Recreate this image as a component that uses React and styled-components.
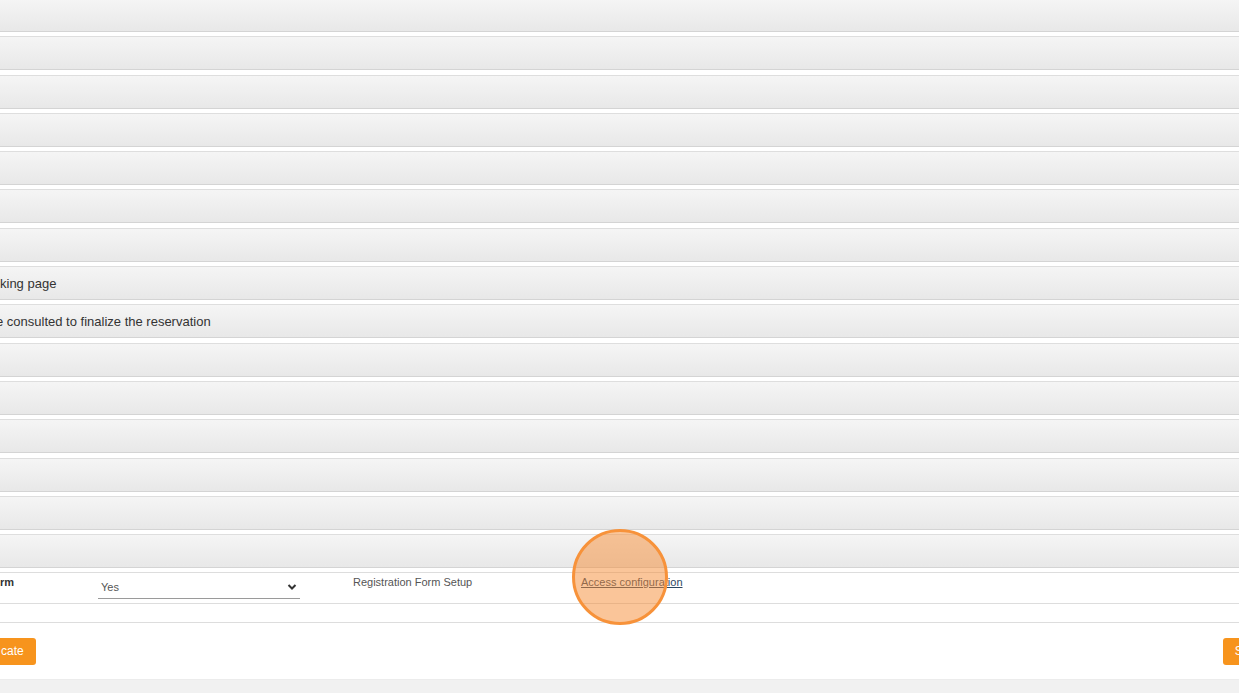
import React from 'react'
import styled, { createGlobalStyle } from 'styled-components'

const Global = createGlobalStyle`
  html, body { margin: 0; padding: 0; background: #fff; }
  body { overflow: hidden; font-family: "Liberation Sans", Arial, sans-serif; }
`

const Page = styled.div`
  width: 1239px;
  height: 693px;
  overflow: hidden;
  display: flex;
  flex-direction: column;
`

const BarList = styled.div`
  display: flex;
  flex-direction: column;
  gap: 4.3px;
  margin-top: -2px;
`

const Bar = styled.div`
  box-sizing: border-box;
  height: 34px;
  display: flex;
  align-items: center;
  border-top: 1px solid #dedede;
  border-bottom: 1px solid #d4d4d4;
  background: linear-gradient(to bottom, #f5f5f5 0%, #e8e8e8 100%);
  font-size: 13px;
  color: #333;
  white-space: nowrap;
  overflow: hidden;
`

const BarLabel = styled.span`
  margin-left: ${p => p.$shift || 0}px;
`

const FormTable = styled.div`
  margin-top: 4px;
  border-top: 1px solid #dddddd;
`

const FormRow = styled.div`
  display: grid;
  grid-template-columns: 98px 255px 228px 1fr;
  height: 31px;
  box-sizing: border-box;
  padding-top: 2px;
  border-bottom: 1px solid #dddddd;
  font-size: 11px;
  color: #555;
`

const SpacerRow = styled.div`
  height: 18px;
  border-bottom: 1px solid #dddddd;
`

const FieldLabel = styled.div`
  font-weight: bold;
  color: #333;
  padding-top: 1px;
`

const Select = styled.div`
  box-sizing: border-box;
  width: 202px;
  height: 24px;
  display: flex;
  align-items: center;
  justify-content: space-between;
  padding: 0 3px;
  border-bottom: 1px solid #9a9a9a;
  color: #555;
`

const Cell = styled.div`
  padding-top: 1px;
`

const Link = styled.a`
  color: #2c4763;
  text-decoration: underline;
  cursor: pointer;
`

const Actions = styled.div`
  height: 56px;
  display: flex;
  align-items: center;
  justify-content: space-between;
`

const Button = styled.button`
  height: 27px;
  border: none;
  border-radius: 3px;
  background: #f7941d;
  color: #fff;
  font-family: "Liberation Sans", Arial, sans-serif;
  font-size: 12px;
  padding: 0 12px;
  margin-left: ${p => p.$left || 0}px;
  margin-right: ${p => p.$right || 0}px;
`

const Footer = styled.div`
  flex: 1;
  background: #f1f1f1;
  border-top: 1px solid #ececec;
`

const Spot = styled.div`
  position: absolute;
  left: 572px;
  top: 529px;
  width: 96px;
  height: 96px;
  box-sizing: border-box;
  border-radius: 50%;
  border: 3px solid #f7923a;
  background: rgba(246, 140, 52, 0.5);
  pointer-events: none;
`

const labels = [
  ['', 0], ['', 0], ['', 0], ['', 0], ['', 0], ['', 0], ['', 0],
  ['king page', 0],
  ['e consulted to finalize the reservation', -4],
  ['', 0], ['', 0], ['', 0], ['', 0], ['', 0], ['', 0],
]

const Chevron = () => (
  <svg width="10" height="8" viewBox="0 0 10 8">
    <path d="M1.5 2 L5 5.5 L8.5 2" fill="none" stroke="#333" strokeWidth="2" />
  </svg>
)

export default function App() {
  return (
    <>
      <Global />
      <Page>
        <BarList>
          {labels.map(([text, shift], i) => (
            <Bar key={i}>
              <BarLabel $shift={shift}>{text}</BarLabel>
            </Bar>
          ))}
        </BarList>
        <FormTable>
          <FormRow>
            <FieldLabel>rm</FieldLabel>
            <Select>
              <span>Yes</span>
              <Chevron />
            </Select>
            <Cell>Registration Form Setup</Cell>
            <Cell><Link>Access configuration</Link></Cell>
          </FormRow>
          <SpacerRow />
        </FormTable>
        <Actions>
          <Button $left={-11}>cate</Button>
          <Button $right={-35}>Save</Button>
        </Actions>
        <Footer />
      </Page>
      <Spot />
    </>
  )
}
